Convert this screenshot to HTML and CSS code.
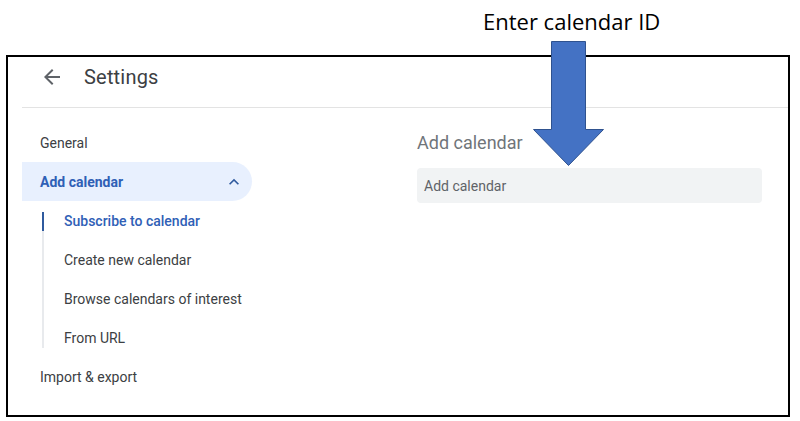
FILE: index.html
```html
<!DOCTYPE html>
<html lang="en">
<head>
<meta charset="utf-8">
<title>Settings - Add calendar</title>
<link rel="stylesheet" href="styles.css">
</head>
<body>
<div class="annotation">Enter calendar ID</div>
<div class="frame">
  <div class="header">
    <svg class="back" viewBox="0 0 24 24" width="24" height="24"><path d="M20 11H7.830l5.59-5.59L12 4l-8 8 8 8 1.41-1.41L7.83 13H20v-2z"/></svg>
    <span class="title">Settings</span>
  </div>
  <div class="body">
    <nav class="nav">
      <div class="nav-item">General</div>
      <div class="nav-item active">
        <span>Add calendar</span>
        <svg class="chev" viewBox="0 0 24 24" width="20" height="20"><path d="M12 8l-6 6 1.41 1.41L12 10.83l4.59 4.58L18 14z"/></svg>
      </div>
      <div class="sub">
        <div class="sub-item current">Subscribe to calendar</div>
        <div class="sub-item">Create new calendar</div>
        <div class="sub-item">Browse calendars of interest</div>
        <div class="sub-item">From URL</div>
      </div>
      <div class="nav-item">Import &amp; export</div>
    </nav>
    <main class="main">
      <h2 class="heading">Add calendar</h2>
      <div class="field">Add calendar</div>
    </main>
  </div>
</div>
<svg class="arrow" viewBox="0 0 72 126" width="72" height="126"><polygon points="18.5,0.5 52.5,0.5 52.5,88.5 70.5,88.5 35.5,124.5 0.5,88.5 18.5,88.5" fill="#4472c4" stroke="#2f528f" stroke-width="1"/></svg>
</body>
</html>
```
FILE: styles.css
```css
html, body {
  margin: 0;
  padding: 0;
  background: #fff;
}
body {
  width: 800px;
  height: 421px;
  position: relative;
  overflow: hidden;
  font-family: Roboto, "Liberation Sans", Arial, sans-serif;
}
.annotation {
  height: 55px;
  box-sizing: border-box;
  padding-left: 483px;
  padding-top: 7px;
  font-family: "Open Sans", Lato, sans-serif;
  font-size: 22px;
  line-height: 28px;
  color: #000;
}
.frame {
  margin-left: 6px;
  width: 784px;
  height: 362px;
  box-sizing: border-box;
  border: 2px solid #000;
}
.header {
  margin-left: 14px;
  height: 39px;
  padding-left: 18px;
  padding-bottom: 11px;
  border-bottom: 1px solid #e3e3e3;
  display: flex;
  align-items: center;
  gap: 20px;
}
.back {
  fill: #5f6368;
  flex: none;
}
.title {
  font-size: 20px;
  color: #3c4043;
  letter-spacing: 0.2px;
}
.body {
  display: grid;
  grid-template-columns: 230px 345px;
  column-gap: 165px;
  margin-left: 14px;
}
.nav {
  padding-top: 15px;
}
.nav-item {
  height: 39px;
  display: flex;
  align-items: center;
  padding-left: 18px;
  font-size: 14px;
  color: #3c4043;
}
.nav-item.active {
  background: #e8f0fe;
  border-radius: 0 20px 20px 0;
  color: #2f60b6;
  font-weight: 700;
  justify-content: space-between;
  padding-right: 8px;
}
.chev {
  fill: #2f5a9e;
}
.sub {
  display: flex;
  flex-direction: column;
  margin-left: 20px;
  margin-top: 11px;
  margin-bottom: 9px;
  border-left: 2px solid #e8eaed;
}
.sub-item {
  position: relative;
  height: 39px;
  flex: none;
  display: flex;
  align-items: center;
  padding-left: 20px;
  font-size: 14px;
  color: #3c4043;
}
.sub-item:first-child {
  margin-top: -11px;
}
.sub-item:last-child {
  margin-bottom: -9px;
}
.sub-item.current {
  color: #2f60b6;
  font-weight: 500;
}
.sub-item.current::before {
  content: "";
  position: absolute;
  left: -2px;
  top: 11px;
  width: 2px;
  height: 19px;
  background: #2f5a9e;
}
.main {
  padding-top: 23px;
}
.heading {
  margin: 0 0 13px;
  font-size: 18px;
  font-weight: 400;
  line-height: 24px;
  color: #70757a;
}
.field {
  height: 35px;
  box-sizing: border-box;
  background: #f1f3f4;
  border-radius: 4px;
  padding-left: 7px;
  display: flex;
  align-items: center;
  font-size: 14px;
  color: #5f6368;
}
.arrow {
  position: absolute;
  left: 533px;
  top: 41px;
}
```
